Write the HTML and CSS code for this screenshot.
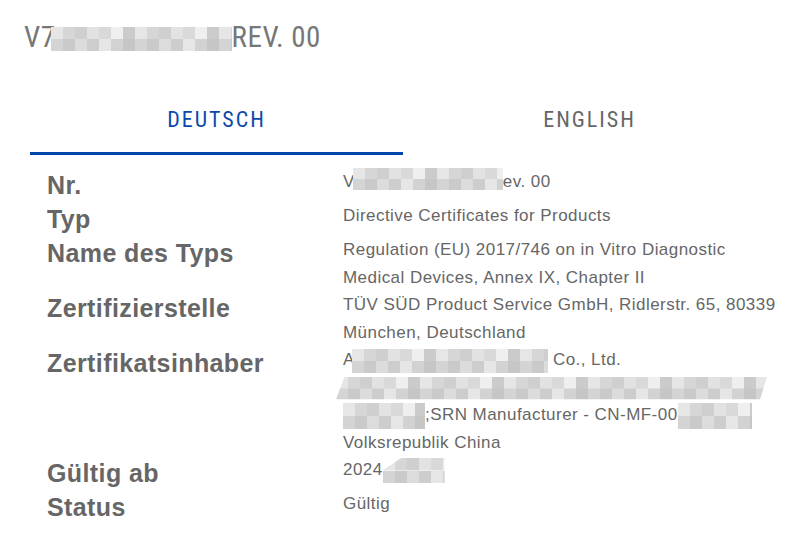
FILE: index.html
```html
<!DOCTYPE html>
<html lang="de">
<head>
	<meta charset="UTF-8">
	<title>Zertifikat</title>
	<link rel="stylesheet" href="styles.css">
</head>
<body>
	<div class="cert">
		<h1 class="cert-no">V7<span class="blur blur-title"></span>REV. 00</h1>

		<div class="tabs">
			<div class="tab active">DEUTSCH</div>
			<div class="tab">ENGLISH</div>
		</div>

		<dl class="details">
			<dt>Nr.</dt>
			<dd>V<span class="blur blur-nr"></span>ev. 00</dd>

			<dt>Typ</dt>
			<dd>Directive Certificates for Products</dd>

			<dt>Name des Typs</dt>
			<dd>Regulation (EU) 2017/746 on in Vitro Diagnostic<br>Medical Devices, Annex IX, Chapter II</dd>

			<dt>Zertifizierstelle</dt>
			<dd>TÜV SÜD Product Service GmbH, Ridlerstr. 65, 80339<br>München, Deutschland</dd>

			<dt>Zertifikatsinhaber</dt>
			<dd>
				A<span class="blur blur-holder"></span> Co., Ltd.<br>
				<span class="blur blur-addr"></span><br>
				<span class="blur blur-srn1"></span>;SRN Manufacturer - CN-MF-00<span class="blur blur-srn2"></span><br>
				Volksrepublik China
			</dd>

			<dt>Gültig ab</dt>
			<dd>2024<span class="blur blur-date"></span></dd>

			<dt>Status</dt>
			<dd>Gültig</dd>
		</dl>
	</div>
</body>
</html>
```

FILE: styles.css
```css
*{
	margin:0;
	padding:0;
}
body{
	background-color: #fff;
	font-family: "Liberation Sans", Arial, sans-serif;
	color: #666;
}
.cert{
	width: 805px;
}
.cert-no{
	margin: 21px 0 0 24px;
	font-family: "Roboto Condensed", Roboto, sans-serif;
	font-stretch: condensed;
	font-weight: 400;
	font-size: 29px;
	letter-spacing: 0.5px;
	line-height: 32px;
	color: #777;
}
.tabs{
	display: flex;
	width: 746px;
	margin: 44px 0 0 30px;
}
.tab{
	flex: 1;
	text-align: center;
	font-family: "Roboto Condensed", Roboto, sans-serif;
	font-stretch: condensed;
	font-size: 22px;
	letter-spacing: 2px;
	line-height: 24px;
	padding: 11px 0 20px;
	color: #666;
	border-bottom: 3px solid transparent;
	cursor: pointer;
}
.tab.active{
	color: #0b49ad;
	border-bottom-color: #0046ad;
}
.details{
	display: grid;
	grid-template-columns: 296px 1fr;
	margin: 13px 0 0 47px;
	width: 740px;
}
.details dt{
	font-weight: bold;
	font-size: 25px;
	letter-spacing: 0.4px;
	line-height: 34px;
}
.details dd{
	font-size: 17px;
	letter-spacing: 0.45px;
	line-height: 27.5px;
	white-space: nowrap;
}

/* verpixelte Stellen */
.blur{
	display: inline-block;
	vertical-align: middle;
	height: 22px;
	background:
		repeating-linear-gradient(90deg, #e6e6e6 0 12px, #d6d6d6 12px 24px, #cfcfcf 24px 36px, #e2e2e2 36px 48px, #d9d9d9 48px 60px, #efefef 60px 72px, #cbcbcb 72px 84px) top / 100% 50% no-repeat,
		repeating-linear-gradient(90deg, #d4d4d4 0 12px, #cacaca 12px 24px, #dcdcdc 24px 36px, #cdcdcd 36px 48px, #e6e6e6 48px 60px, #d2d2d2 60px 72px, #c6c6c6 72px 84px) bottom / 100% 50% no-repeat;
}
.blur-title{
	width: 181px;
	height: 24px;
	margin-left: -5px;
	vertical-align: -4px;
}
.blur-nr{
	width: 150px;
	margin-left: -2px;
	vertical-align: -3px;
}
.blur-holder{
	width: 196px;
	height: 24px;
	margin-left: -3px;
}
.blur-addr{
	width: 431px;
	height: 23px;
	margin-left: -7px;
	clip-path: polygon(2% 0, 100% 0, 98.4% 100%, 0 100%);
}
.blur-srn1{
	width: 82px;
	height: 26px;
}
.blur-srn2{
	width: 74px;
	height: 26px;
}
.blur-date{
	width: 62px;
	height: 25px;
	clip-path: polygon(30% 0, 100% 0, 100% 100%, 0 100%, 0 50%);
}
```
